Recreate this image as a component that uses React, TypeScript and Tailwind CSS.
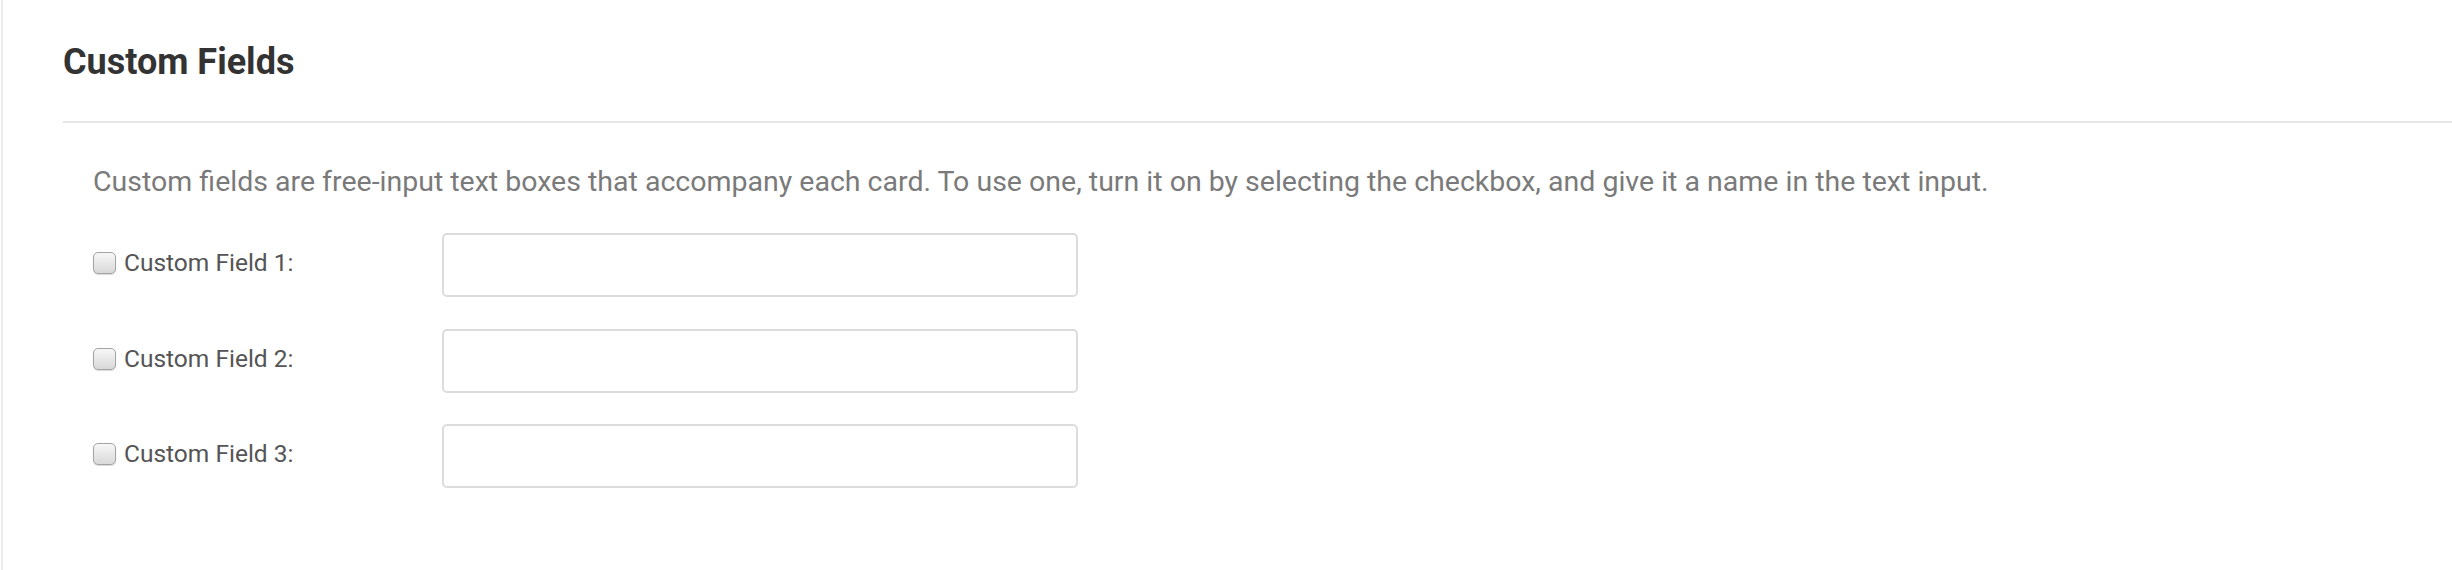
import React from "react";

const fields = ["Custom Field 1:", "Custom Field 2:", "Custom Field 3:"];

export default function App() {
  return (
    <div
      className="min-h-[570px] bg-white ml-[1px] border-l-2 border-[#ececec]"
      style={{ fontFamily: "Roboto, 'Liberation Sans', sans-serif" }}
    >
      <div className="ml-[60px] pt-[41px] pb-[37px] border-b-2 border-[#e6e6e6]">
        <h2 className="text-[36px] leading-[43px] font-bold text-[#333333]">Custom Fields</h2>
      </div>
      <div className="ml-[90px] pt-[40px]">
        <p className="text-[28.5px] leading-[38px] text-[#7a7a7a]">
          Custom fields are free-input text boxes that accompany each card. To use one, turn it on by selecting the checkbox, and give it a name in the text input.
        </p>
        <div className="mt-[32px] flex flex-col gap-[31.5px]">
          {fields.map((f) => (
            <div key={f} className="flex items-center">
              <label className="w-[349px] flex items-center gap-[8px] -mt-[4px]">
                <input
                  type="checkbox"
                  className="appearance-none w-[23px] h-[22px] rounded-[5px] border border-[#a3a3a3] bg-gradient-to-b from-[#f7f7f7] to-[#d9d9d9] shadow-[0_1px_1px_rgba(0,0,0,0.15)]"
                />
                <span className="text-[24.5px] leading-[30px] text-[#555555]">{f}</span>
              </label>
              <input
                type="text"
                className="w-[636px] h-[64px] rounded-[5px] border-2 border-[#dcdcdc] bg-white outline-none"
              />
            </div>
          ))}
        </div>
      </div>
    </div>
  );
}
